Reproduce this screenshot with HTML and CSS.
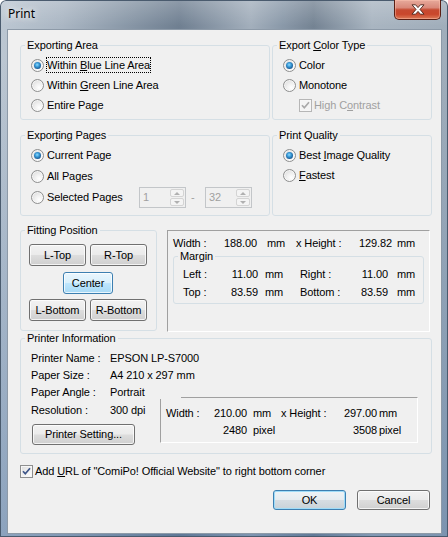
FILE: index.html
```html
<!DOCTYPE html>
<html>
<head>
<meta charset="utf-8">
<title>Print</title>
<link rel="stylesheet" href="styles.css">
</head>
<body>
<div class="window">
  <div class="titlebar">
    <span class="title">Print</span>
    <div class="close">
      <svg width="14" height="11" viewBox="0 0 14 11"><polygon points="1,0.8 4.6,0.8 7,3.6 9.4,0.8 13,0.8 9,5.4 13,10.2 9.4,10.2 7,7.4 4.6,10.2 1,10.2 5,5.4" fill="#fff" stroke="#4a2219" stroke-width="0.9" stroke-linejoin="round"/></svg>
    </div>
  </div>
  <div class="client">
    <div class="row row1">
      <fieldset class="grp g-area">
        <legend>Exporting Area</legend>
        <div class="opts">
          <div class="opt"><span class="radio on"></span><span class="lbl focus">Within <u>B</u>lue Line Area</span></div>
          <div class="opt"><span class="radio"></span><span class="lbl">Within <u>G</u>reen Line Area</span></div>
          <div class="opt"><span class="radio"></span><span class="lbl">Entire Pa<u>g</u>e</span></div>
        </div>
      </fieldset>
      <fieldset class="grp g-color">
        <legend>Export <u>C</u>olor Type</legend>
        <div class="opts">
          <div class="opt"><span class="radio on"></span><span class="lbl">Color</span></div>
          <div class="opt"><span class="radio"></span><span class="lbl">Monotone</span></div>
          <div class="opt sub"><span class="check dis"><svg width="11" height="11" viewBox="0 0 11 11"><path d="M2 5.2 L4.3 7.8 L9 2.2" fill="none" stroke="#a9a9a9" stroke-width="1.7"/></svg></span><span class="lbl dim cl">High C<u>o</u>ntrast</span></div>
        </div>
      </fieldset>
    </div>

    <div class="row row2">
      <fieldset class="grp g-pages">
        <legend>Expor<u>t</u>ing Pages</legend>
        <div class="opts opts2">
          <div class="opt h21"><span class="radio on"></span><span class="lbl">Current Page</span></div>
          <div class="opt h21"><span class="radio"></span><span class="lbl">All Pages</span></div>
          <div class="opt h21"><span class="radio"></span><span class="lbl wsel">Selected Pages</span>
            <span class="spin"><span class="spin-val">1</span><span class="spin-btns"><span class="sb"><span class="tri up"></span></span><span class="sb"><span class="tri dn"></span></span></span></span>
            <span class="dash">-</span>
            <span class="spin"><span class="spin-val">32</span><span class="spin-btns"><span class="sb"><span class="tri up"></span></span><span class="sb"><span class="tri dn"></span></span></span></span>
          </div>
        </div>
      </fieldset>
      <fieldset class="grp g-quality">
        <legend>Print Quality</legend>
        <div class="opts">
          <div class="opt"><span class="radio on"></span><span class="lbl">Best <u>I</u>mage Quality</span></div>
          <div class="opt"><span class="radio"></span><span class="lbl"><u>F</u>astest</span></div>
        </div>
      </fieldset>
    </div>

    <div class="row row3">
      <fieldset class="grp g-fit">
        <legend>Fitting Position</legend>
        <div class="fit">
          <div class="btn">L-Top</div>
          <div class="btn">R-Top</div>
          <div class="btn hot center">Center</div>
          <div class="btn">L-Bottom</div>
          <div class="btn">R-Bottom</div>
        </div>
      </fieldset>
      <div class="sunken size1">
        <div class="s1row">
          <span>Width :</span><span class="r">188.00</span><span class="u1">mm</span><span>x Height :</span><span class="r">129.82</span><span class="u2">mm</span>
        </div>
        <fieldset class="grp margin">
          <legend>Margin</legend>
          <div class="mrows">
            <div class="mrow"><span>Left :</span><span class="r">11.00</span><span class="mu1">mm</span><span>Right :</span><span class="r">11.00</span><span class="mu2">mm</span></div>
            <div class="mrow"><span>Top :</span><span class="r">83.59</span><span class="mu1">mm</span><span>Bottom :</span><span class="r">83.59</span><span class="mu2">mm</span></div>
          </div>
        </fieldset>
      </div>
    </div>

    <fieldset class="grp g-printer">
      <legend>Printer Information</legend>
      <div class="pi">
        <div class="pi-left">
          <div class="pi-row"><span class="pi-k">Printer Name :</span><span>EPSON LP-S7000</span></div>
          <div class="pi-row r2"><span class="pi-k">Paper Size :</span><span>A4 210 x 297 mm</span></div>
          <div class="pi-row r3"><span class="pi-k">Paper Angle :</span><span>Portrait</span></div>
          <div class="pi-row r4"><span class="pi-k">Resolution :</span><span>300 dpi</span></div>
          <div class="btn psetting">Printer Setting...</div>
        </div>
        <div class="sunken size2">
          <div class="s2row"><span>Width :</span><span class="r">210.00</span><span class="v1">mm</span><span>x Height :</span><span class="r">297.00</span><span class="v2">mm</span></div>
          <div class="s2row"><span></span><span class="r">2480</span><span class="v1">pixel</span><span></span><span class="r">3508</span><span class="v2">pixel</span></div>
        </div>
      </div>
    </fieldset>

    <div class="urlrow">
      <span class="check"><svg width="11" height="11" viewBox="0 0 11 11"><path d="M2 5.2 L4.3 7.8 L9 2.2" fill="none" stroke="#3d5588" stroke-width="1.7"/></svg></span>
      <span class="urltext">Add <u>U</u>RL of "ComiPo! Official Website" to right bottom corner</span>
    </div>

    <div class="actions">
      <div class="btn act default">OK</div>
      <div class="btn act">Cancel</div>
    </div>
  </div>
</div>
</body>
</html>
```

FILE: styles.css
```css
* { box-sizing: border-box; }
html, body { margin: 0; padding: 0; }
body {
  font-family: "Liberation Sans", Arial, sans-serif;
  font-size: 11px;
  line-height: 13px;
  letter-spacing: -0.1px;
  color: #000;
  background: #fff;
}
u { text-decoration: underline; text-underline-offset: 1px; }

.window {
  width: 448px;
  height: 537px;
  display: flex;
  flex-direction: column;
  border-radius: 6px 6px 0 0;
  overflow: hidden;
  background:
    linear-gradient(180deg, rgba(255,255,255,0.22) 0, rgba(255,255,255,0) 26px),
    linear-gradient(180deg, rgba(70,110,160,0) 60px, rgba(70,110,160,0.4) 100%),
    linear-gradient(90deg, #bcc7d2 0%, #aab6c3 14%, #8594a4 30%, #6f7f91 40%, #a3afbc 56%, #8a99a9 63%, #748393 70%, #a9b5c1 83%, #a0adba 100%);
  box-shadow: inset 0 0 0 1px #4a5b6e;
}

.titlebar {
  height: 29px;
  flex: none;
  display: flex;
  justify-content: space-between;
  align-items: flex-start;
  padding-left: 8px;
}
.title {
  font-family: "Noto Sans", "Open Sans", sans-serif;
  font-size: 12px;
  line-height: 16px;
  letter-spacing: 0;
  margin-top: 6px;
  color: #000;
  text-shadow: 0 0 6px rgba(255,255,255,0.9), 0 0 10px rgba(255,255,255,0.7);
}
.close {
  width: 47px;
  height: 20px;
  margin-right: 7px;
  border: 1px solid #5a1f14;
  border-top: none;
  border-radius: 0 0 5px 5px;
  background: linear-gradient(180deg, #e7aa9c 0%, #d9897a 40%, #c64a31 52%, #c9472c 75%, #dc7a58 100%);
  box-shadow: inset 0 0 0 1px rgba(255,200,180,0.45);
  display: flex;
  align-items: center;
  justify-content: center;
}

.client {
  flex: none;
  width: 435px;
  height: 505px;
  margin-left: 7px;
  border: 1px solid #8d9aa8;
  background: #f0f0f0;
  padding-left: 12px;
}

.row { display: flex; align-items: flex-start; }
.row1 { margin-top: 9px; gap: 2px; }
.row2 { margin-top: 9px; gap: 2px; align-items: stretch; }
.row3 { margin-top: 8px; }

fieldset.grp {
  margin: 0;
  padding: 0;
  border: 1px solid #d5dfe5;
  border-radius: 3px;
  min-width: 0;
}
fieldset.grp > legend {
  margin-left: 4px;
  padding: 0 2px;
  line-height: 13px;
  white-space: nowrap;
}

.g-area { width: 250px; }
.g-color { width: 160px; }
.g-pages { width: 250px; }
.g-quality { width: 160px; }

.opts { padding: 3px 10px 4px 10px; }
.opts2 { padding: 3px 10px 7px 10px; }
.opt { display: flex; align-items: center; height: 20px; white-space: nowrap; }
.opt.h21 { height: 21px; }
.opt.sub { padding-left: 16px; }
.lbl { margin-left: 3px; }
.lbl.cl { margin-left: 2px; }
.dim { color: #a0a0a0; }
.focus {
  margin-left: 2px;
  border: 1px dotted #000;
  padding: 1px 0 0 0;
  line-height: 13px;
}
.wsel { width: 92px; }

.radio {
  flex: none;
  position: relative;
  width: 13px;
  height: 13px;
  border-radius: 50%;
  border: 1px solid #8e8f8f;
  background: radial-gradient(circle at 65% 70%, #ffffff 0, #f2f2f2 35%, #d6d6d6 100%);
  box-shadow: inset 0 0 0 1px rgba(255,255,255,0.6);
}
.radio.on::after {
  content: "";
  position: absolute;
  left: 2px;
  top: 2px;
  width: 7px;
  height: 7px;
  border-radius: 50%;
  background: radial-gradient(circle at 45% 40%, #8fdcff 0, #3a9bd8 35%, #17558f 75%, #123a66 100%);
}

.check {
  flex: none;
  width: 13px;
  height: 13px;
  border: 1px solid #8e8f8f;
  background: linear-gradient(135deg, #dcdcdc 0%, #f2f2f2 60%, #ffffff 100%);
  box-shadow: inset 0 0 0 1px #f6f6f6;
  display: flex;
  align-items: center;
  justify-content: center;
}
.check.dis { border-color: #b6b6b6; background: #f4f4f4; }
.check svg { display: block; }

.spin {
  flex: none;
  width: 47px;
  height: 21px;
  display: flex;
  border: 1px solid #c3c6c9;
  background: #f0f0f0;
}
.spin-val {
  flex: 1;
  color: #a0a0a0;
  padding-left: 3px;
  line-height: 19px;
}
.spin-btns {
  width: 15px;
  display: flex;
  flex-direction: column;
  padding: 1px 1px 1px 0;
  gap: 1px;
}
.sb {
  flex: 1;
  border: 1px solid #d4d4d4;
  border-radius: 2px;
  background: #f4f4f4;
  display: flex;
  align-items: center;
  justify-content: center;
}
.tri { width: 0; height: 0; border-left: 3px solid transparent; border-right: 3px solid transparent; }
.tri.up { border-bottom: 3px solid #b0b0b0; }
.tri.dn { border-top: 3px solid #b0b0b0; }
.dash { width: 19px; padding-left: 5px; color: #a0a0a0; }

.btn {
  display: flex;
  align-items: center;
  justify-content: center;
  height: 22px;
  border: 1px solid #707070;
  border-radius: 3px;
  white-space: nowrap;
  background: linear-gradient(180deg, #f2f2f2 0%, #ebebeb 48%, #dddddd 52%, #cfcfcf 100%);
  box-shadow: inset 0 0 0 1px rgba(255,255,255,0.75);
}
.btn.hot {
  border-color: #3c7fb1;
  background: linear-gradient(180deg, #eaf6fd 0%, #d9f0fc 48%, #bee6fd 52%, #a7d9f5 100%);
}
.btn.default {
  border-color: #3c7fb1;
  box-shadow: inset 0 0 0 1px #9fdcf8;
  background: linear-gradient(180deg, #eef3f6 0%, #e6ecf0 48%, #d6dde2 52%, #c9d2d8 100%);
}

.g-fit { width: 137px; }
.fit {
  display: grid;
  grid-template-columns: 57px 57px;
  column-gap: 4px;
  row-gap: 5px;
  padding: 7px 9px 9px 8px;
}
.fit .center {
  grid-column: 1 / span 2;
  justify-self: center;
  width: 50px;
  margin-top: 1px;
}

.sunken {
  border: 1px solid;
  border-color: #a0a0a0 #ffffff #ffffff #a0a0a0;
}
.size1 {
  width: 263px;
  height: 102px;
  margin-left: 10px;
  margin-top: 6px;
  padding: 6px 5px 0 5px;
}
.s1row {
  display: grid;
  grid-template-columns: 40px 44px 39px 50px 46px auto;
  height: 13px;
  white-space: nowrap;
}
.r { text-align: right; }
.u1 { padding-left: 10px; }
.u2 { padding-left: 5px; }

.margin { width: 251px; margin-top: 6px; }
.mrows { padding: 2px 0 2px 9px; }
.mrow {
  display: grid;
  grid-template-columns: 40px 35px 42px 50px 38px auto;
  height: 18px;
  align-items: center;
  white-space: nowrap;
}
.mu1 { padding-left: 7px; }
.mu2 { padding-left: 9px; }

.g-printer { width: 412px; margin-top: 8px; }
.pi {
  display: flex;
  align-items: flex-end;
  padding: 7px 13px 8px 10px;
}
.pi-left { width: 129px; flex: none; }
.pi-row { height: 13px; white-space: nowrap; }
.pi-row.r2 { margin-top: 4px; }
.pi-row.r3 { margin-top: 4px; }
.pi-row.r4 { margin-top: 5px; }
.pi-k { display: inline-block; width: 79px; }
.psetting { width: 103px; height: 21px; margin-top: 7px; margin-left: 1px; }

.size2 {
  position: relative;
  width: 258px;
  height: 46px;
  margin-bottom: 2px;
  padding: 9px 0 0 5px;
}
.size2::before {
  content: "";
  position: absolute;
  left: -1px;
  top: -1px;
  width: 21px;
  height: 2px;
  background: #f0f0f0;
}
.s2row {
  display: grid;
  grid-template-columns: 40px 41px 34px 50px 46px auto;
  height: 17px;
  white-space: nowrap;
}
.v1 { padding-left: 6px; }
.v2 { padding-left: 2px; }

.urlrow {
  margin-top: 11px;
  display: flex;
  align-items: center;
  height: 13px;
  white-space: nowrap;
}
.urltext { margin-left: 2px; }

.actions {
  display: flex;
  justify-content: flex-end;
  gap: 11px;
  margin-top: 12px;
  padding-right: 11px;
}
.btn.act { width: 73px; height: 20px; }
```
